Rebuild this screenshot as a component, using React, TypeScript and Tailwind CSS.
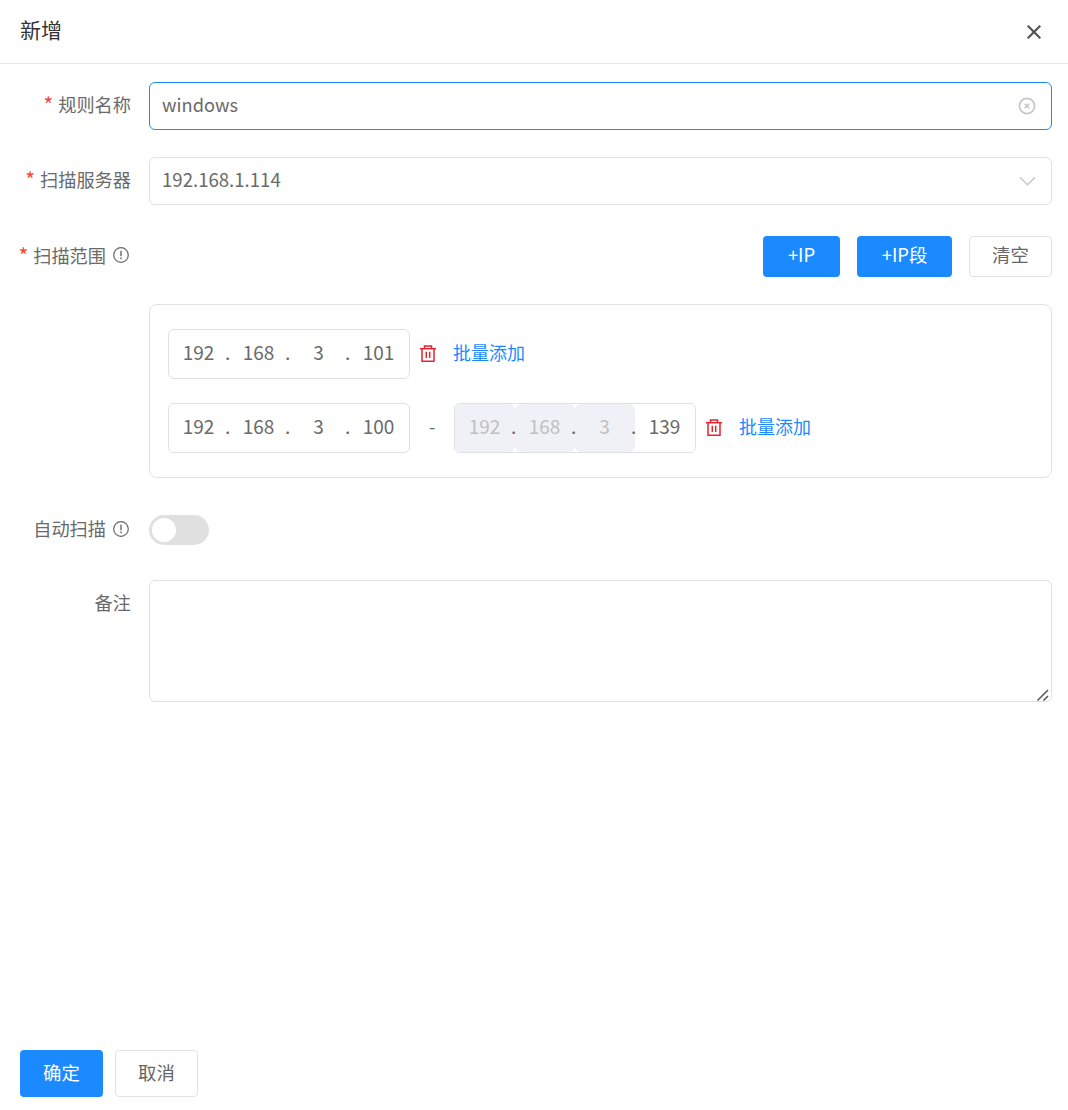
import { X } from 'lucide-react';

const font = '[font-family:"Noto_Sans_CJK_SC","Noto_Sans",sans-serif]';

function InfoIcon() {
  return (
    <svg viewBox="0 0 16 16" className="w-[16px] h-[16px] ml-[7px] mr-[2px] text-[#666]" fill="none" stroke="currentColor">
      <circle cx="8" cy="8" r="7.3" strokeWidth="1.2" />
      <path d="M8 3.8v5.4" strokeWidth="1.4" />
      <path d="M8 10.6v1.6" strokeWidth="1.4" />
    </svg>
  );
}

function TrashIcon() {
  return (
    <svg viewBox="0 0 16 17" className="w-[16px] h-[17px] ml-[10px] mb-[2px] text-[#e8232f]" fill="none" stroke="currentColor" strokeWidth="1.5">
      <path d="M0 3.7h16" />
      <path d="M4.5 3.7V1h7v2.7" />
      <path d="M2 3.7v12.6h12V3.7" />
      <path d="M6.3 6.8v6.2M9.7 6.8v6.2" />
    </svg>
  );
}

function Label({ text, required, info, className = '' }: { text: string; required?: boolean; info?: boolean; className?: string }) {
  return (
    <div className={`w-[131px] shrink-0 flex items-center justify-end text-[18.2px] text-[#6a6a6a] pb-[2px] ${className}`}>
      {required && <span className="text-[#f5483b] mr-[5px] text-[21px] leading-none">*</span>}
      <span>{text}</span>
      {info && <InfoIcon />}
    </div>
  );
}

function IpField({ parts, locked = 0 }: { parts: string[]; locked?: number }) {
  return (
    <div className="w-[242px] h-[50px] flex border border-[#dfe0e6] rounded-[6px] overflow-hidden text-[19px] text-[#6a6a6a] shrink-0">
      {parts.map((part, i) => (
        <div key={i} className={`w-[60px] h-full flex items-center pb-[4px] ${i < locked ? 'bg-[#f0f1f6] rounded-[6px]' : ''}`}>
          <span className={`w-[59px] text-center ${i < locked ? 'text-[#c0c0c0]' : ''}`}>{part}</span>
          {i < 3 && <span className="w-0 -ml-[3px] relative z-10 text-[#666]">.</span>}
        </div>
      ))}
    </div>
  );
}

function RowActions() {
  return (
    <>
      <TrashIcon />
      <a className="ml-[17px] text-[18px] text-[#1c8aff] pb-[4px]">批量添加</a>
    </>
  );
}

export default function App() {
  return (
    <div className={`${font} h-[1110px] w-[1068px] bg-white flex flex-col`}>
      {/* Header */}
      <div className="h-[64px] shrink-0 border-b border-[#e8e8e8] flex items-center justify-between pl-[20px] pr-[23px]">
        <h2 className="text-[21px] text-[#333] pb-[3px]">新增</h2>
        <X className="w-[22px] h-[22px] text-[#555]" strokeWidth={2.4} strokeLinecap="square" />
      </div>

      {/* Form */}
      <div className="flex-1 pt-[18px] pr-[16px]">
        <div className="flex items-center gap-[18px]">
          <Label text="规则名称" required />
          <div className="flex-1 h-[48px] border border-[#1c8aff] rounded-[6px] flex items-center pl-[12px] pr-[15px]">
            <input readOnly value="windows" className="flex-1 text-[18.2px] text-[#6a6a6a] outline-none bg-transparent pb-[2px]" />
            <svg viewBox="0 0 18 18" className="w-[18px] h-[18px] text-[#c4c4c4]" fill="none" stroke="currentColor">
              <circle cx="9" cy="9" r="7.6" strokeWidth="1.6" />
              <path d="M6.8 6.8l4.4 4.4M11.2 6.8l-4.4 4.4" strokeWidth="1.6" />
            </svg>
          </div>
        </div>

        <div className="flex items-center gap-[18px] mt-[27px]">
          <Label text="扫描服务器" required />
          <div className="flex-1 h-[48px] border border-[#e2e2e2] rounded-[6px] flex items-center justify-between pl-[12px] pr-[15px]">
            <span className="text-[18.6px] text-[#6a6a6a] pb-[4px]">192.168.1.114</span>
            <svg viewBox="0 0 18 10" className="w-[17px] h-[10px] text-[#c4c4c4]" fill="none" stroke="currentColor" strokeWidth="1.4">
              <path d="M1 1l8 8 8-8" />
            </svg>
          </div>
        </div>

        <div className="flex items-center gap-[18px] mt-[31px]">
          <Label text="扫描范围" required info />
          <div className="flex-1 flex justify-end">
            <button className="w-[77px] h-[41px] rounded-[4px] bg-[#1c8aff] text-white text-[18.4px] pb-[4px]">+IP</button>
            <button className="w-[95px] h-[41px] rounded-[4px] bg-[#1c8aff] text-white text-[18.4px] ml-[17px] pb-[4px]">+IP段</button>
            <button className="w-[83px] h-[41px] rounded-[4px] border border-[#e2e2e2] text-[#666] text-[18.4px] ml-[17px] pb-[4px]">清空</button>
          </div>
        </div>

        <div className="ml-[149px] mt-[27px] h-[174px] border border-[#e2e2e2] rounded-[8px] pt-[24px] pl-[18px]">
          <div className="flex items-center">
            <IpField parts={['192', '168', '3', '101']} />
            <RowActions />
          </div>
          <div className="flex items-center mt-[24px]">
            <IpField parts={['192', '168', '3', '100']} />
            <span className="w-[44px] text-center text-[18px] text-[#666] pb-[4px]">-</span>
            <IpField parts={['192', '168', '3', '139']} locked={3} />
            <RowActions />
          </div>
        </div>

        <div className="flex items-center gap-[18px] mt-[37px]">
          <Label text="自动扫描" info />
          <div className="w-[60px] h-[30px] rounded-full bg-[#e0e0e0] flex items-center pl-[3px]">
            <div className="w-[24px] h-[24px] rounded-full bg-white" />
          </div>
        </div>

        <div className="flex items-start gap-[18px] mt-[35px]">
          <Label text="备注" className="pt-[9px]" />
          <div className="relative flex-1 h-[122px]">
            <textarea readOnly className="block w-full h-full border border-[#e2e2e2] rounded-[6px] outline-none resize-none" />
            <svg viewBox="0 0 12 12" className="absolute right-[3px] bottom-[1px] w-[12px] h-[12px] text-[#555]" fill="none" stroke="currentColor" strokeWidth="1.5">
              <path d="M0.5 11.5L11 1M6.5 11.5L11 7" />
            </svg>
          </div>
        </div>
      </div>

      {/* Footer */}
      <div className="shrink-0 flex gap-[12px] pl-[20px] pb-[13px]">
        <button className="w-[83px] h-[47px] rounded-[4px] bg-[#1c8aff] text-white text-[18.4px] pb-[2px]">确定</button>
        <button className="w-[83px] h-[47px] rounded-[4px] border border-[#e2e2e2] text-[#666] text-[18.4px] pb-[2px]">取消</button>
      </div>
    </div>
  );
}
